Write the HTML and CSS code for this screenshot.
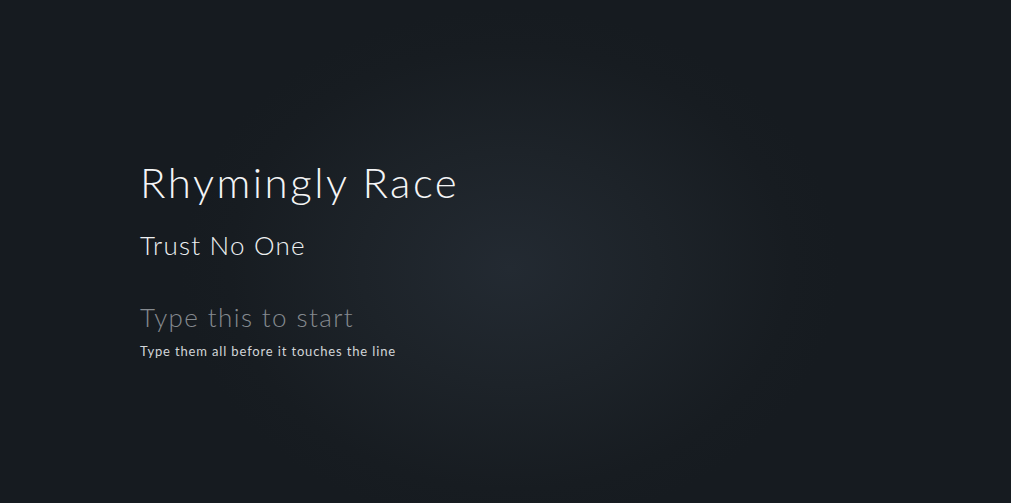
FILE: index.html
```html
<!DOCTYPE html>
<html>
<head>
<meta charset="utf-8">
<link rel="stylesheet" href="styles.css">
</head>
<body>
<main class="screen">
  <section class="intro">
    <h1 class="title">Rhymingly Race</h1>
    <h2 class="subtitle">Trust No One</h2>
    <p class="prompt">Type this to start</p>
    <p class="hint">Type them all before it touches the line</p>
  </section>
</main>
</body>
</html>
```
FILE: styles.css
```css
html, body {
  margin: 0;
  padding: 0;
  height: 100%;
}
body {
  background: #161b20;
  font-family: "Lato", "Open Sans", sans-serif;
  font-weight: 300;
  color: #f2f3f4;
  overflow: hidden;
}
.screen {
  height: 100%;
  background: radial-gradient(ellipse 330px 260px at 510px 268px, #232a32 0%, #1d2329 45%, #171c21 85%, #161b20 100%);
  box-sizing: border-box;
  padding-top: 156px;
  padding-left: 140px;
}
.intro {
  display: flex;
  flex-direction: column;
}
.title {
  margin: 0;
  font-size: 42px;
  font-weight: 300;
  letter-spacing: 2.5px;
  line-height: 52px;
  color: #f4f5f6;
}
.subtitle {
  margin: 21px 0 0;
  font-size: 26px;
  font-weight: 300;
  letter-spacing: 1.2px;
  line-height: 32px;
  color: #eef0f1;
}
.prompt {
  margin: 40px 0 0;
  font-size: 26px;
  font-weight: 300;
  letter-spacing: 1.4px;
  line-height: 32px;
  color: #858a8f;
}
.hint {
  margin: 9px 0 0;
  font-size: 13px;
  font-weight: 400;
  letter-spacing: 0.85px;
  line-height: 18px;
  color: #d2d5d8;
}
```
